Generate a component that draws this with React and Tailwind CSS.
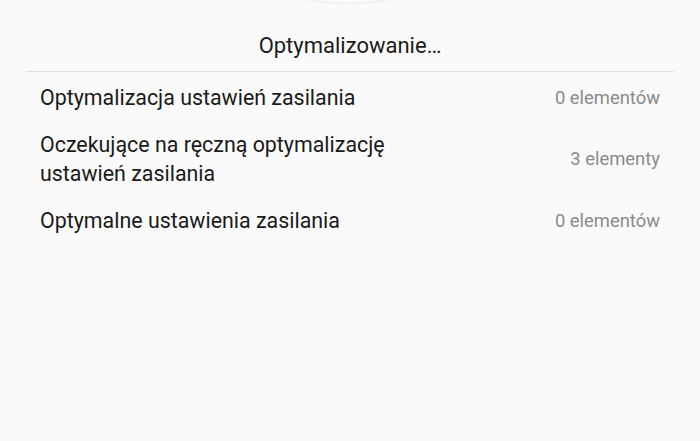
const rows = [
  { label: "Optymalizacja ustawień zasilania", count: "0 elementów" },
  { label: ["Oczekujące na ręczną optymalizację", "ustawień zasilania"], count: "3 elementy" },
  { label: "Optymalne ustawienia zasilania", count: "0 elementów" },
];

export default function App() {
  return (
    <div
      className="relative w-[700px] h-[441px] overflow-hidden bg-[#fafafa]"
      style={{ fontFamily: "Roboto, 'Noto Sans', sans-serif" }}
    >
      {/* bottom edge of the progress ring above */}
      <svg className="absolute left-[305px] top-0" width="86" height="5" viewBox="0 0 86 5">
        <path d="M2 0 Q43 7 84 0" fill="none" stroke="#f0f0f0" strokeWidth="1.5" />
      </svg>

      <div className="h-[71px] flex items-end justify-center pb-[11px]">
        <h1 className="text-[22px] leading-[29px] text-[#1a1a1a]">Optymalizowanie…</h1>
      </div>
      <div className="mx-[26px] h-px bg-[#e2e2e2]" />

      <div className="flex flex-col gap-[18px] pt-[11px] pl-[40px] pr-[40px]">
        {rows.map((r, i) => (
          <div key={i} className="flex items-center justify-between">
            <div className="text-[21.4px] leading-[29px] text-[#1a1a1a]">
              {Array.isArray(r.label)
                ? r.label.map((l) => <div key={l}>{l}</div>)
                : r.label}
            </div>
            <div className="text-[18.4px] text-[#8a8a8a]">{r.count}</div>
          </div>
        ))}
      </div>
    </div>
  );
}
